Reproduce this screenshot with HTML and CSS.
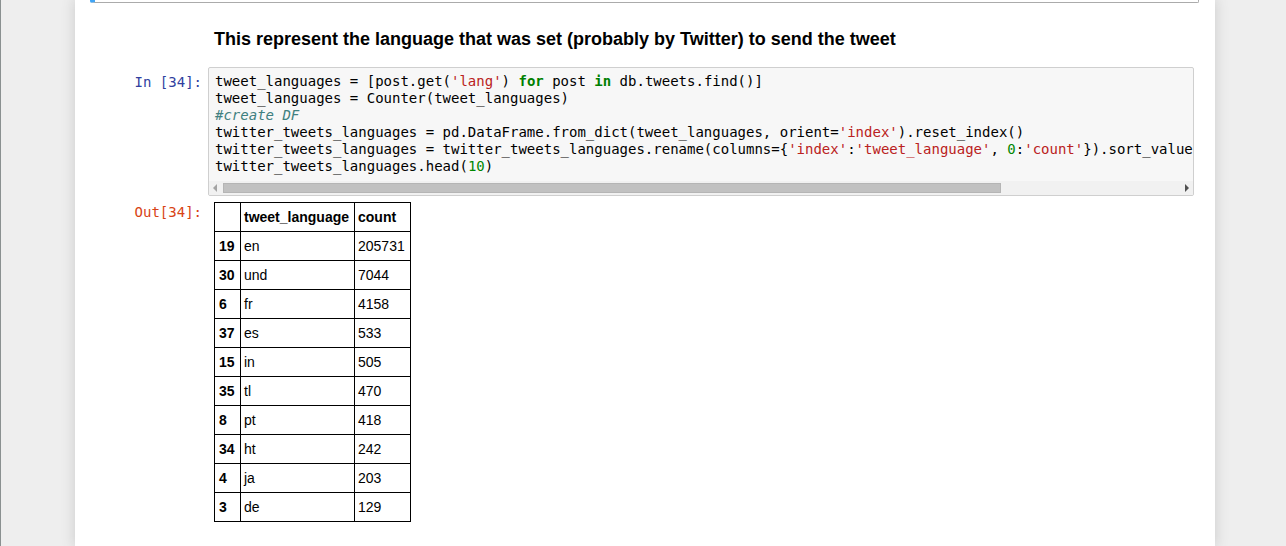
FILE: index.html
```html
<!DOCTYPE html>
<html>
<head>
<meta charset="utf-8">
<link rel="stylesheet" href="styles.css">
</head>
<body>
<div class="page">
  <div class="notebook">
    <div class="prev-cell"></div>

    <div class="cell text-cell">
      <div class="prompt"></div>
      <div class="rendered">
        <h4 class="heading">This represent the language that was set (probably by Twitter) to send the tweet</h4>
      </div>
    </div>

    <div class="cell code-cell">
      <div class="prompt in-prompt">In&nbsp;[34]:</div>
      <div class="input-area">
        <div class="code"><pre>tweet_languages = [post.get(<span class="s">'lang'</span>) <span class="k">for</span> post <span class="k">in</span> db.tweets.find()]
tweet_languages = Counter(tweet_languages)
<span class="c">#create DF</span>
twitter_tweets_languages = pd.DataFrame.from_dict(tweet_languages, orient=<span class="s">'index'</span>).reset_index()
twitter_tweets_languages = twitter_tweets_languages.rename(columns={<span class="s">'index'</span>:<span class="s">'tweet_language'</span>, <span class="n">0</span>:<span class="s">'count'</span>}).sort_values(by=<span class="s">'count'</span>, ascending=<span class="k">False</span>)
twitter_tweets_languages.head(<span class="n">10</span>)</pre></div>
        <div class="hscroll">
          <span class="arrow-left"></span>
          <div class="track"><div class="thumb"></div></div>
          <span class="arrow-right"></span>
        </div>
      </div>
    </div>

    <div class="cell output-cell">
      <div class="prompt out-prompt">Out[34]:</div>
      <div class="output-area">
        <table class="df">
          <colgroup>
            <col class="col-idx">
            <col class="col-lang">
            <col class="col-count">
          </colgroup>
          <thead>
            <tr><th></th><th>tweet_language</th><th>count</th></tr>
          </thead>
          <tbody>
            <tr><th>19</th><td>en</td><td>205731</td></tr>
            <tr><th>30</th><td>und</td><td>7044</td></tr>
            <tr><th>6</th><td>fr</td><td>4158</td></tr>
            <tr><th>37</th><td>es</td><td>533</td></tr>
            <tr><th>15</th><td>in</td><td>505</td></tr>
            <tr><th>35</th><td>tl</td><td>470</td></tr>
            <tr><th>8</th><td>pt</td><td>418</td></tr>
            <tr><th>34</th><td>ht</td><td>242</td></tr>
            <tr><th>4</th><td>ja</td><td>203</td></tr>
            <tr><th>3</th><td>de</td><td>129</td></tr>
          </tbody>
        </table>
      </div>
    </div>
  </div>
</div>
</body>
</html>
```

FILE: styles.css
```css
html, body {
  margin: 0;
  padding: 0;
  height: 100%;
  overflow: hidden;
}

body {
  background: #eeeeee;
  font-family: "Liberation Sans", Arial, sans-serif;
  color: #000;
}

.page {
  height: 100%;
  border-left: 1px solid #8a9090;
  box-sizing: border-box;
}

.notebook {
  margin-left: 74px;
  width: 1140px;
  height: 100%;
  background: #fff;
  box-shadow: 0 0 12px 1px rgba(87, 87, 87, 0.2);
  padding: 0 16px 0 15px;
  box-sizing: border-box;
}

.prev-cell {
  height: 2px;
  border: 1px solid #ababab;
  border-top: none;
  border-left: 5px solid #42a5f5;
  border-radius: 0 0 2px 2px;
}

.cell {
  display: flex;
  padding-right: 5px;
}

.prompt {
  width: 118px;
  flex: none;
  box-sizing: border-box;
  padding-right: 6px;
  text-align: right;
  font-family: "DejaVu Sans Mono", monospace;
  font-size: 14px;
  line-height: 17px;
}

.in-prompt {
  color: #303f9f;
  padding-top: 7px;
}

.out-prompt {
  color: #d84315;
  padding-top: 2px;
}

.rendered {
  flex: 1;
  padding-left: 6px;
}

.heading {
  margin: 25px 0 0 0;
  font-size: 18px;
  line-height: 22px;
  font-weight: bold;
}

.code-cell {
  margin-top: 17px;
}

.input-area {
  flex: 1;
  min-width: 0;
  background: #f7f7f7;
  border: 1px solid #cfcfcf;
  border-radius: 2px;
  overflow: hidden;
}

.code {
  padding: 5px 0 0 6px;
  overflow: hidden;
}

.code pre {
  margin: 0;
  font-family: "DejaVu Sans Mono", monospace;
  font-size: 14px;
  line-height: 17px;
  color: #000;
  white-space: pre;
}

.code .s { color: #ba2121; }
.code .k { color: #008000; font-weight: bold; }
.code .c { color: #408080; font-style: italic; }
.code .n { color: #008800; }

.hscroll {
  margin-top: 6px;
  height: 14px;
  display: flex;
  align-items: center;
  background: #f1f1f1;
}

.arrow-left {
  width: 0;
  height: 0;
  margin-left: 4px;
  border-top: 4px solid transparent;
  border-bottom: 4px solid transparent;
  border-right: 4px solid #a3a3a3;
}

.track {
  flex: 1;
  height: 10px;
  margin: 0 7px 0 6px;
  display: flex;
}

.thumb {
  width: 778px;
  height: 100%;
  background: #c1c1c1;
  box-sizing: border-box;
  border: 1px solid #b5b5b5;
}

.arrow-right {
  width: 0;
  height: 0;
  margin-right: 4px;
  border-top: 4px solid transparent;
  border-bottom: 4px solid transparent;
  border-left: 4px solid #505050;
}

.output-cell {
  margin-top: 6px;
}

.output-area {
  flex: 1;
  padding-left: 6px;
}

.df {
  border-collapse: collapse;
  table-layout: fixed;
  width: 196px;
  font-size: 14px;
}

.col-idx { width: 26px; }
.col-lang { width: 114px; }
.col-count { width: 56px; }

.df th,
.df td {
  border: 1px solid #000;
  height: 29px;
  padding: 0 0 0 3px;
  text-align: left;
  vertical-align: middle;
  box-sizing: border-box;
  line-height: 17px;
  white-space: nowrap;
  overflow: hidden;
}

.df tbody th {
  padding-left: 4px;
}

.df th {
  font-weight: bold;
}
```
